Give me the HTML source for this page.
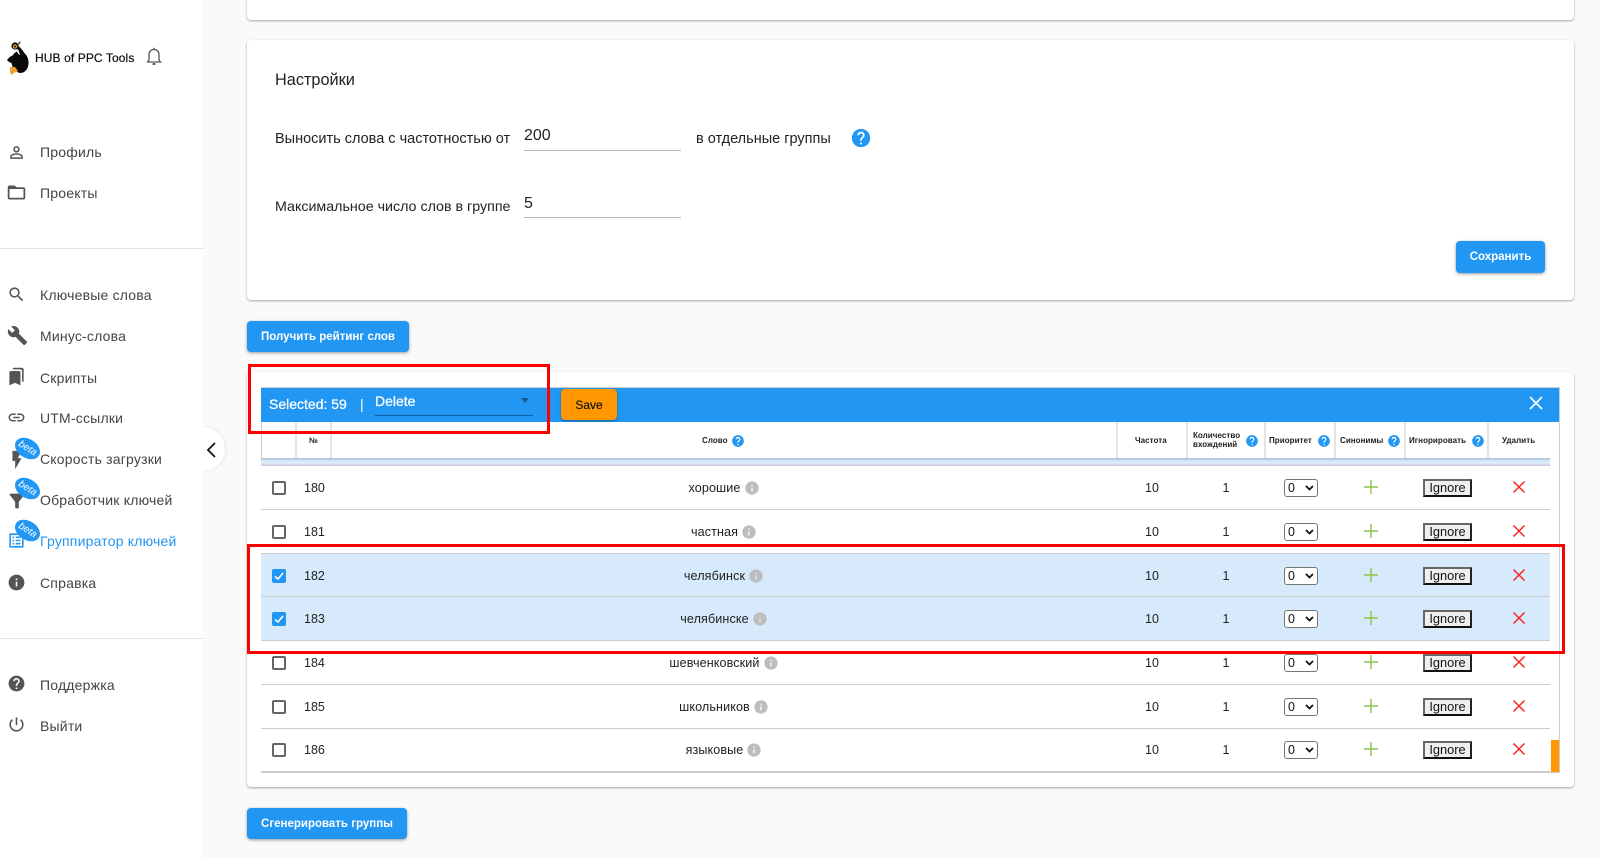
<!DOCTYPE html>
<html lang="ru"><head><meta charset="utf-8"><title>HUB of PPC Tools</title>
<style>
*{box-sizing:border-box}
html,body{margin:0;padding:0;width:1600px;height:858px;overflow:hidden;background:#fafafa;font-family:"Liberation Sans","Noto Sans CJK SC",sans-serif;color:#111}
.a{position:absolute}
#side{position:absolute;left:0;top:0;width:203px;height:858px;background:#fff}
.it{position:absolute;left:40px;font-size:14px;line-height:20px;color:#444;white-space:nowrap;letter-spacing:.2px}
.ic{position:absolute;left:7px;width:19px;height:19px;fill:#555}
.hr{position:absolute;left:0;width:203px;height:1px;background:#e2e2e2}
.beta{position:absolute;left:14px;width:27px;height:19px;border-radius:50%;background:#2196f3;color:#fff;font-size:10px;line-height:19px;text-align:center;font-style:italic;transform:rotate(32deg)}
.card{position:absolute;left:247px;width:1327px;background:#fff;border-radius:4px;box-shadow:0 1px 2px rgba(0,0,0,.35)}
.btn{position:absolute;background:#2196f3;color:#fff;font-weight:bold;font-size:11.5px;border-radius:4px;text-align:center;box-shadow:0 1px 3px rgba(0,0,0,.4);white-space:nowrap}
.t{position:absolute;white-space:nowrap;font-size:14.5px;line-height:20px;color:#222}
.ul{position:absolute;height:1px;background:#bbb;left:524px;width:157px}
.sep{position:absolute;top:422px;width:2px;height:36px;background:#e3e3e3}
.h{position:absolute;font-size:8px;font-weight:bold;line-height:9px;color:#222;white-space:nowrap;letter-spacing:.05px}
.q{position:absolute;width:14px;height:14px;fill:#2196f3}
.r{position:absolute;left:261px;width:1289px;height:44px;background:#fff;border-bottom:1px solid #ccc}
.r.s{background:#d6eafc}
.cb{position:absolute;left:11px;top:15px;width:14px;height:14px;border:2px solid #666;border-radius:2px;background:#fff}
.r.s .cb{background:#2196f3;border-color:#2196f3}
.cb svg{position:absolute;left:-2px;top:-2px;width:14px;height:14px}
.n{position:absolute;left:43px;top:12px;font-size:12.5px;line-height:20px;color:#222}
.w{position:absolute;left:70px;top:12px;width:786px;height:20px;display:flex;justify-content:center;align-items:center;font-size:12.6px;letter-spacing:.1px;color:#222;gap:3px}
.w svg{width:16px;height:16px;fill:#bdbdbd}
.f{position:absolute;left:867px;width:48px;top:12px;text-align:center;font-size:12.5px;line-height:20px;color:#222}
.c{position:absolute;left:941px;width:48px;top:12px;text-align:center;font-size:12.5px;line-height:20px;color:#222}
.sl{position:absolute;left:1023px;top:13px;width:34px;height:18px;border:1px solid #767676;border-radius:3px;background:#fff;font-size:12.5px;line-height:16px;padding-left:3px;color:#111}
.sl svg{position:absolute;right:3px;top:5px;width:9px;height:6px}
.pl{position:absolute;left:1103px;top:14px;width:14px;height:14px}
.ig{position:absolute;left:1162px;top:13px;width:49px;height:18px;border:2px solid;border-color:#666 #222 #111 #666;background:#efefef;font-size:12.8px;line-height:14px;text-align:center;color:#111}
.x{position:absolute;left:1251px;top:14px;width:14px;height:14px}
.red{position:absolute;border:3px solid #f00;pointer-events:none}
</style></head><body>

<div id="side">
<svg class="a" style="left:5px;top:40px" width="26" height="36" viewBox="0 0 26 36">
<ellipse cx="15" cy="22" rx="8.5" ry="11" fill="#0a0a0a" transform="rotate(-8 15 22)"/>
<path d="M2 20 C5 16 9 14 13 15 L13 24 C9 24 4 23 2 20Z" fill="#0a0a0a"/>
<path d="M9 5 C13 7 16 10 18 14" fill="none" stroke="#0a0a0a" stroke-width="3"/>
<path d="M11 9 C12 12 13 14 15 15 C15 13 13 10 11 9Z" fill="#fff"/>
<circle cx="10" cy="6" r="3.6" fill="#0a0a0a"/>
<circle cx="10" cy="6.5" r="2.2" fill="#e8a030"/><circle cx="10" cy="6.5" r="1" fill="#111"/>
<path d="M5 27 L10 27 L13 31 L9 33 L6 35 L5 31Z" fill="#f0a22e"/>
<path d="M13 3 L16 1 L14 5Z" fill="#333"/>
</svg>
<div class="a" style="left:35px;top:49px;font-size:12px;line-height:18px;color:#111;white-space:nowrap;-webkit-text-stroke:.2px #111;letter-spacing:.1px">HUB of PPC Tools</div>
<svg class="a" style="left:146px;top:47px" width="16" height="19" viewBox="0 0 16 19"><path d="M1.5 15 L3 13 V7.5 C3 4.5 5.2 2.5 8 2.5 C10.8 2.5 13 4.5 13 7.5 V13 L14.5 15 Z" fill="none" stroke="#555" stroke-width="1.3"/><path d="M8 .8V2.5" stroke="#555" stroke-width="1.5"/><path d="M6.5 17 H9.5" stroke="#444" stroke-width="1.6"/></svg>

<svg class="ic" style="top:143px" viewBox="0 0 24 24"><path d="M12 5.9c1.16 0 2.1.94 2.1 2.1s-.94 2.1-2.1 2.1S9.9 9.16 9.9 8s.94-2.1 2.1-2.1m0 9c2.97 0 6.1 1.46 6.1 2.1v1.1H5.9V17c0-.64 3.13-2.1 6.1-2.1M12 4C9.79 4 8 5.79 8 8s1.79 4 4 4 4-1.79 4-4-1.79-4-4-4zm0 9c-2.67 0-8 1.34-8 4v3h16v-3c0-2.66-5.33-4-8-4z"/></svg>
<div class="it" style="top:142px">Профиль</div>
<svg class="ic" style="top:182px;left:6px;width:21px;height:21px" viewBox="0 0 24 24"><path d="M20 6h-8l-2-2H4c-1.1 0-1.99.9-1.99 2L2 18c0 1.1.9 2 2 2h16c1.1 0 2-.9 2-2V8c0-1.1-.9-2-2-2zm0 12H4V8h16v10z"/></svg>
<div class="it" style="top:183px">Проекты</div>
<div class="hr" style="top:248px"></div>

<svg class="ic" style="top:285px" viewBox="0 0 24 24"><path d="M15.5 14h-.79l-.28-.27C15.41 12.59 16 11.11 16 9.5 16 5.91 13.09 3 9.5 3S3 5.91 3 9.5 5.91 16 9.5 16c1.61 0 3.09-.59 4.23-1.57l.27.28v.79l5 4.99L20.49 19l-4.99-5zm-6 0C7.01 14 5 11.99 5 9.5S7.01 5 9.5 5 14 7.01 14 9.5 11.99 14 9.5 14z"/></svg>
<div class="it" style="top:285px">Ключевые слова</div>
<svg class="ic" style="top:325px;left:7px;width:21px;height:21px" viewBox="0 0 24 24"><path d="M22.7 19l-9.1-9.1c.9-2.3.4-5-1.5-6.9-2-2-5-2.4-7.4-1.3L9 6 6 9 1.6 4.7C.4 7.1.9 10.1 2.9 12.1c1.9 1.9 4.6 2.4 6.9 1.5l9.1 9.1c.4.4 1 .4 1.4 0l2.3-2.3c.5-.4.5-1.1.1-1.4z"/></svg>
<div class="it" style="top:326px">Минус-слова</div>
<svg class="ic" style="top:367px;left:7px" viewBox="0 0 24 24"><path d="M19 18l2 1V3c0-1.1-.9-2-2-2H8.99C7.89 1 7 1.9 7 3h10c1.1 0 2 .9 2 2v13zM15 5H5c-1.1 0-2 .9-2 2v16l7-3 7 3V7c0-1.1-.9-2-2-2z"/></svg>
<div class="it" style="top:368px">Скрипты</div>
<svg class="ic" style="top:408px;left:7px" viewBox="0 0 24 24"><path d="M3.9 12c0-1.71 1.39-3.1 3.1-3.1h4V7H7c-2.76 0-5 2.24-5 5s2.24 5 5 5h4v-1.9H7c-1.71 0-3.1-1.39-3.1-3.1zM8 13h8v-2H8v2zm9-6h-4v1.9h4c1.71 0 3.1 1.39 3.1 3.1s-1.39 3.1-3.1 3.1h-4V17h4c2.76 0 5-2.24 5-5s-2.24-5-5-5z"/></svg>
<div class="it" style="top:408px">UTM-ссылки</div>
<svg class="ic" style="top:449px;left:6px;width:22px;height:22px" viewBox="0 0 24 24"><path d="M7 2v11h3v9l7-12h-4l4-8z"/></svg>
<div class="it" style="top:449px">Скорость загрузки</div>
<div class="beta" style="top:439px">beta</div>
<svg class="ic" style="top:490px;left:6px;width:22px;height:22px" viewBox="0 0 24 24"><path d="M4.25 5.61C6.27 8.2 10 13 10 13v6c0 .55.45 1 1 1h2c.55 0 1-.45 1-1v-6s3.72-4.8 5.74-7.39c.51-.66.04-1.61-.79-1.61H5.04c-.83 0-1.3.95-.79 1.61z"/></svg>
<div class="it" style="top:490px">Обработчик ключей</div>
<div class="beta" style="top:479px">beta</div>
<svg class="ic" style="top:531px;left:7px;fill:#2196f3" viewBox="0 0 24 24"><path d="M19 5v14H5V5h14m1.1-2H3.9c-.5 0-.9.4-.9.9v16.2c0 .4.4.9.9.9h16.2c.4 0 .9-.5.9-.9V3.9c0-.5-.5-.9-.9-.9zM11 7h6v2h-6V7zm0 4h6v2h-6v-2zm0 4h6v2h-6v-2zM7 7h2v2H7V7zm0 4h2v2H7v-2zm0 4h2v2H7v-2z"/></svg>
<div class="it" style="top:531px;color:#2196f3">Группиратор ключей</div>
<div class="beta" style="top:521px">beta</div>
<svg class="ic" style="top:573px" viewBox="0 0 24 24"><path d="M12 2C6.48 2 2 6.48 2 12s4.48 10 10 10 10-4.48 10-10S17.52 2 12 2zm1 15h-2v-6h2v6zm0-8h-2V7h2v2z"/></svg>
<div class="it" style="top:573px">Справка</div>
<div class="hr" style="top:638px"></div>
<svg class="ic" style="top:674px" viewBox="0 0 24 24"><path d="M12 2C6.48 2 2 6.48 2 12s4.48 10 10 10 10-4.48 10-10S17.52 2 12 2zm1 17h-2v-2h2v2zm2.07-7.75l-.9.92C13.45 12.9 13 13.5 13 15h-2v-.5c0-1.1.45-2.1 1.17-2.83l1.24-1.26c.37-.36.59-.86.59-1.41 0-1.1-.9-2-2-2s-2 .9-2 2H8c0-2.21 1.79-4 4-4s4 1.79 4 4c0 .88-.36 1.68-.93 2.25z"/></svg>
<div class="it" style="top:675px">Поддержка</div>
<svg class="ic" style="top:715px" viewBox="0 0 24 24"><path d="M13 3h-2v10h2V3zm4.83 2.17l-1.42 1.42C17.99 7.86 19 9.81 19 12c0 3.87-3.13 7-7 7s-7-3.13-7-7c0-2.19 1.01-4.14 2.58-5.42L6.17 5.17C4.23 6.82 3 9.26 3 12c0 4.97 4.03 9 9 9s9-4.03 9-9c0-2.74-1.23-5.18-3.17-6.83z"/></svg>
<div class="it" style="top:716px">Выйти</div>
</div>

<div class="a" style="left:181px;top:427px;width:44px;height:44px;border-radius:50%;background:#fff;box-shadow:1px 0 3px rgba(0,0,0,.08);clip-path:inset(-6px -6px -6px 22px)"></div>
<svg class="a" style="left:205px;top:441px" width="14" height="18" viewBox="0 0 14 18"><path d="M10 2 L3 9 L10 16" fill="none" stroke="#111" stroke-width="1.8"/></svg>

<div class="card" style="top:-20px;height:40px"></div>
<div class="card" style="top:40px;height:260px"></div>
<div class="t" style="left:275px;top:69px;font-size:16.3px;line-height:22px">Настройки</div>
<div class="t" style="left:275px;top:129px">Выносить слова с частотностью от</div>
<div class="t" style="left:524px;top:125px;font-size:16px;line-height:22px">200</div>
<div class="ul" style="top:150px"></div>
<div class="t" style="left:696px;top:129px">в отдельные группы</div>
<svg class="a" style="left:850px;top:127px;fill:#2196f3" width="22" height="22" viewBox="0 0 24 24"><path d="M12 2C6.48 2 2 6.48 2 12s4.48 10 10 10 10-4.48 10-10S17.52 2 12 2zm1 17h-2v-2h2v2zm2.07-7.75l-.9.92C13.45 12.9 13 13.5 13 15h-2v-.5c0-1.1.45-2.1 1.17-2.83l1.24-1.26c.37-.36.59-.86.59-1.41 0-1.1-.9-2-2-2s-2 .9-2 2H8c0-2.21 1.79-4 4-4s4 1.79 4 4c0 .88-.36 1.68-.93 2.25z"/></svg>
<div class="t" style="left:275px;top:197px;font-size:14.25px">Максимальное число слов в группе</div>
<div class="t" style="left:524px;top:193px;font-size:16px;line-height:22px">5</div>
<div class="ul" style="top:217px"></div>
<div class="btn" style="left:1456px;top:241px;width:89px;height:32px;line-height:32px">Сохранить</div>
<div class="btn" style="left:247px;top:321px;width:162px;height:31px;line-height:32px">Получить рейтинг слов</div>

<div class="card" style="top:372px;height:415px"></div>
<div class="a" style="left:261px;top:387px;width:1299px;height:386px;border:1px solid #ccc;background:#fff"></div>
<div class="a" style="left:261px;top:388px;width:1298px;height:34px;background:#2196f3"></div>
<div class="a" style="left:269px;top:394px;font-size:14px;line-height:20px;color:#fff;white-space:nowrap;-webkit-text-stroke:.25px #fff">Selected: 59</div>
<div class="a" style="left:360px;top:394px;font-size:14px;line-height:20px;color:#fff">|</div>
<div class="a" style="left:375px;top:391px;font-size:14px;line-height:20px;color:#fff;-webkit-text-stroke:.25px #fff">Delete</div>
<div class="a" style="left:375px;top:415px;width:158px;height:1px;background:#0d5c9e"></div>
<div class="a" style="left:521px;top:398px;width:0;height:0;border:4px solid transparent;border-top:5px solid #1a5a90"></div>
<div class="a" style="left:561px;top:389px;width:56px;height:31px;background:#ff9800;border-radius:4px;box-shadow:0 1px 2px rgba(0,0,0,.35);font-size:12px;line-height:33px;text-align:center;color:#111;-webkit-text-stroke:.15px #111">Save</div>
<svg class="a" style="left:1528px;top:396px" width="16" height="14" viewBox="0 0 16 14"><path d="M2 1 L14 13 M14 1 L2 13" stroke="#fff" stroke-width="1.7"/></svg>

<div class="sep" style="left:295px"></div><div class="sep" style="left:330px"></div><div class="sep" style="left:1116px"></div><div class="sep" style="left:1186px"></div><div class="sep" style="left:1264px"></div><div class="sep" style="left:1334px"></div><div class="sep" style="left:1404px"></div><div class="sep" style="left:1487px"></div>
<div class="a" style="left:261px;top:458px;width:1289px;height:8px;background:linear-gradient(#a5bccd 0,#c5d9ea 2px,#d6eafc 3px,#d6eafc 6px,#ccd 7px)"></div>

<div class="h" style="left:309px;top:436px">№</div>
<div class="h" style="left:702px;top:436px">Слово</div>
<svg class="q" style="left:731px;top:434px" viewBox="0 0 24 24"><path d="M12 2C6.48 2 2 6.48 2 12s4.48 10 10 10 10-4.48 10-10S17.52 2 12 2zm1 17h-2v-2h2v2zm2.07-7.75l-.9.92C13.45 12.9 13 13.5 13 15h-2v-.5c0-1.1.45-2.1 1.17-2.83l1.24-1.26c.37-.36.59-.86.59-1.41 0-1.1-.9-2-2-2s-2 .9-2 2H8c0-2.21 1.79-4 4-4s4 1.79 4 4c0 .88-.36 1.68-.93 2.25z"/></svg>
<div class="h" style="left:1135px;top:436px">Частота</div>
<div class="h" style="left:1193px;top:431px">Количество<br>вхождений</div>
<svg class="q" style="left:1245px;top:434px" viewBox="0 0 24 24"><path d="M12 2C6.48 2 2 6.48 2 12s4.48 10 10 10 10-4.48 10-10S17.52 2 12 2zm1 17h-2v-2h2v2zm2.07-7.75l-.9.92C13.45 12.9 13 13.5 13 15h-2v-.5c0-1.1.45-2.1 1.17-2.83l1.24-1.26c.37-.36.59-.86.59-1.41 0-1.1-.9-2-2-2s-2 .9-2 2H8c0-2.21 1.79-4 4-4s4 1.79 4 4c0 .88-.36 1.68-.93 2.25z"/></svg>
<div class="h" style="left:1269px;top:436px">Приоритет</div>
<svg class="q" style="left:1317px;top:434px" viewBox="0 0 24 24"><path d="M12 2C6.48 2 2 6.48 2 12s4.48 10 10 10 10-4.48 10-10S17.52 2 12 2zm1 17h-2v-2h2v2zm2.07-7.75l-.9.92C13.45 12.9 13 13.5 13 15h-2v-.5c0-1.1.45-2.1 1.17-2.83l1.24-1.26c.37-.36.59-.86.59-1.41 0-1.1-.9-2-2-2s-2 .9-2 2H8c0-2.21 1.79-4 4-4s4 1.79 4 4c0 .88-.36 1.68-.93 2.25z"/></svg>
<div class="h" style="left:1340px;top:436px">Синонимы</div>
<svg class="q" style="left:1387px;top:434px" viewBox="0 0 24 24"><path d="M12 2C6.48 2 2 6.48 2 12s4.48 10 10 10 10-4.48 10-10S17.52 2 12 2zm1 17h-2v-2h2v2zm2.07-7.75l-.9.92C13.45 12.9 13 13.5 13 15h-2v-.5c0-1.1.45-2.1 1.17-2.83l1.24-1.26c.37-.36.59-.86.59-1.41 0-1.1-.9-2-2-2s-2 .9-2 2H8c0-2.21 1.79-4 4-4s4 1.79 4 4c0 .88-.36 1.68-.93 2.25z"/></svg>
<div class="h" style="left:1409px;top:436px">Игнорировать</div>
<svg class="q" style="left:1471px;top:434px" viewBox="0 0 24 24"><path d="M12 2C6.48 2 2 6.48 2 12s4.48 10 10 10 10-4.48 10-10S17.52 2 12 2zm1 17h-2v-2h2v2zm2.07-7.75l-.9.92C13.45 12.9 13 13.5 13 15h-2v-.5c0-1.1.45-2.1 1.17-2.83l1.24-1.26c.37-.36.59-.86.59-1.41 0-1.1-.9-2-2-2s-2 .9-2 2H8c0-2.21 1.79-4 4-4s4 1.79 4 4c0 .88-.36 1.68-.93 2.25z"/></svg>
<div class="h" style="left:1502px;top:436px">Удалить</div>

<div class="r" style="top:466px"><div class="cb"></div><div class="n">180</div><div class="w">хорошие<svg viewBox="0 0 24 24"><path d="M12 2C6.48 2 2 6.48 2 12s4.48 10 10 10 10-4.48 10-10S17.52 2 12 2zm1 15h-2v-6h2v6zm0-8h-2V7h2v2z"/></svg></div><div class="f">10</div><div class="c">1</div><div class="sl">0<svg viewBox="0 0 9 6"><path d="M1 1 L4.5 4.5 L8 1" fill="none" stroke="#111" stroke-width="1.8"/></svg></div><svg class="pl" viewBox="0 0 14 14"><path d="M7 0V14M0 7H14" stroke="#8bc34a" stroke-width="1.4"/></svg><div class="ig">Ignore</div><svg class="x" viewBox="0 0 14 14"><path d="M1.5 1.5L12.5 12.5M12.5 1.5L1.5 12.5" stroke="#f22" stroke-width="1.5"/></svg></div>

<div class="r" style="top:510px"><div class="cb"></div><div class="n">181</div><div class="w">частная<svg viewBox="0 0 24 24"><path d="M12 2C6.48 2 2 6.48 2 12s4.48 10 10 10 10-4.48 10-10S17.52 2 12 2zm1 15h-2v-6h2v6zm0-8h-2V7h2v2z"/></svg></div><div class="f">10</div><div class="c">1</div><div class="sl">0<svg viewBox="0 0 9 6"><path d="M1 1 L4.5 4.5 L8 1" fill="none" stroke="#111" stroke-width="1.8"/></svg></div><svg class="pl" viewBox="0 0 14 14"><path d="M7 0V14M0 7H14" stroke="#8bc34a" stroke-width="1.4"/></svg><div class="ig">Ignore</div><svg class="x" viewBox="0 0 14 14"><path d="M1.5 1.5L12.5 12.5M12.5 1.5L1.5 12.5" stroke="#f22" stroke-width="1.5"/></svg></div>

<div class="r s" style="top:554px;height:43px"><div class="cb"><svg viewBox="0 0 14 14"><path d="M3 7.5 L6 10 L11 4" fill="none" stroke="#fff" stroke-width="1.6"/></svg></div><div class="n">182</div><div class="w">челябинск<svg viewBox="0 0 24 24"><path d="M12 2C6.48 2 2 6.48 2 12s4.48 10 10 10 10-4.48 10-10S17.52 2 12 2zm1 15h-2v-6h2v6zm0-8h-2V7h2v2z"/></svg></div><div class="f">10</div><div class="c">1</div><div class="sl">0<svg viewBox="0 0 9 6"><path d="M1 1 L4.5 4.5 L8 1" fill="none" stroke="#111" stroke-width="1.8"/></svg></div><svg class="pl" viewBox="0 0 14 14"><path d="M7 0V14M0 7H14" stroke="#8bc34a" stroke-width="1.4"/></svg><div class="ig">Ignore</div><svg class="x" viewBox="0 0 14 14"><path d="M1.5 1.5L12.5 12.5M12.5 1.5L1.5 12.5" stroke="#f22" stroke-width="1.5"/></svg></div>

<div class="r s" style="top:597px"><div class="cb"><svg viewBox="0 0 14 14"><path d="M3 7.5 L6 10 L11 4" fill="none" stroke="#fff" stroke-width="1.6"/></svg></div><div class="n">183</div><div class="w">челябинске<svg viewBox="0 0 24 24"><path d="M12 2C6.48 2 2 6.48 2 12s4.48 10 10 10 10-4.48 10-10S17.52 2 12 2zm1 15h-2v-6h2v6zm0-8h-2V7h2v2z"/></svg></div><div class="f">10</div><div class="c">1</div><div class="sl">0<svg viewBox="0 0 9 6"><path d="M1 1 L4.5 4.5 L8 1" fill="none" stroke="#111" stroke-width="1.8"/></svg></div><svg class="pl" viewBox="0 0 14 14"><path d="M7 0V14M0 7H14" stroke="#8bc34a" stroke-width="1.4"/></svg><div class="ig">Ignore</div><svg class="x" viewBox="0 0 14 14"><path d="M1.5 1.5L12.5 12.5M12.5 1.5L1.5 12.5" stroke="#f22" stroke-width="1.5"/></svg></div>

<div class="r" style="top:641px"><div class="cb"></div><div class="n">184</div><div class="w">шевченковский<svg viewBox="0 0 24 24"><path d="M12 2C6.48 2 2 6.48 2 12s4.48 10 10 10 10-4.48 10-10S17.52 2 12 2zm1 15h-2v-6h2v6zm0-8h-2V7h2v2z"/></svg></div><div class="f">10</div><div class="c">1</div><div class="sl">0<svg viewBox="0 0 9 6"><path d="M1 1 L4.5 4.5 L8 1" fill="none" stroke="#111" stroke-width="1.8"/></svg></div><svg class="pl" viewBox="0 0 14 14"><path d="M7 0V14M0 7H14" stroke="#8bc34a" stroke-width="1.4"/></svg><div class="ig">Ignore</div><svg class="x" viewBox="0 0 14 14"><path d="M1.5 1.5L12.5 12.5M12.5 1.5L1.5 12.5" stroke="#f22" stroke-width="1.5"/></svg></div>

<div class="r" style="top:685px"><div class="cb"></div><div class="n">185</div><div class="w">школьников<svg viewBox="0 0 24 24"><path d="M12 2C6.48 2 2 6.48 2 12s4.48 10 10 10 10-4.48 10-10S17.52 2 12 2zm1 15h-2v-6h2v6zm0-8h-2V7h2v2z"/></svg></div><div class="f">10</div><div class="c">1</div><div class="sl">0<svg viewBox="0 0 9 6"><path d="M1 1 L4.5 4.5 L8 1" fill="none" stroke="#111" stroke-width="1.8"/></svg></div><svg class="pl" viewBox="0 0 14 14"><path d="M7 0V14M0 7H14" stroke="#8bc34a" stroke-width="1.4"/></svg><div class="ig">Ignore</div><svg class="x" viewBox="0 0 14 14"><path d="M1.5 1.5L12.5 12.5M12.5 1.5L1.5 12.5" stroke="#f22" stroke-width="1.5"/></svg></div>

<div class="r" style="top:728px"><div class="cb"></div><div class="n">186</div><div class="w">языковые<svg viewBox="0 0 24 24"><path d="M12 2C6.48 2 2 6.48 2 12s4.48 10 10 10 10-4.48 10-10S17.52 2 12 2zm1 15h-2v-6h2v6zm0-8h-2V7h2v2z"/></svg></div><div class="f">10</div><div class="c">1</div><div class="sl">0<svg viewBox="0 0 9 6"><path d="M1 1 L4.5 4.5 L8 1" fill="none" stroke="#111" stroke-width="1.8"/></svg></div><svg class="pl" viewBox="0 0 14 14"><path d="M7 0V14M0 7H14" stroke="#8bc34a" stroke-width="1.4"/></svg><div class="ig">Ignore</div><svg class="x" viewBox="0 0 14 14"><path d="M1.5 1.5L12.5 12.5M12.5 1.5L1.5 12.5" stroke="#f22" stroke-width="1.5"/></svg></div>
<div class="a" style="left:261px;top:728px;width:1289px;height:1px;background:#ccc"></div>

<div class="a" style="left:1551px;top:740px;width:8px;height:32px;background:#ff9800"></div>

<div class="red" style="left:248px;top:364px;width:302px;height:70px"></div>
<div class="red" style="left:247px;top:544px;width:1318px;height:110px"></div>

<div class="btn" style="left:247px;top:808px;width:160px;height:31px;line-height:32px">Сгенерировать группы</div>
</body></html>
